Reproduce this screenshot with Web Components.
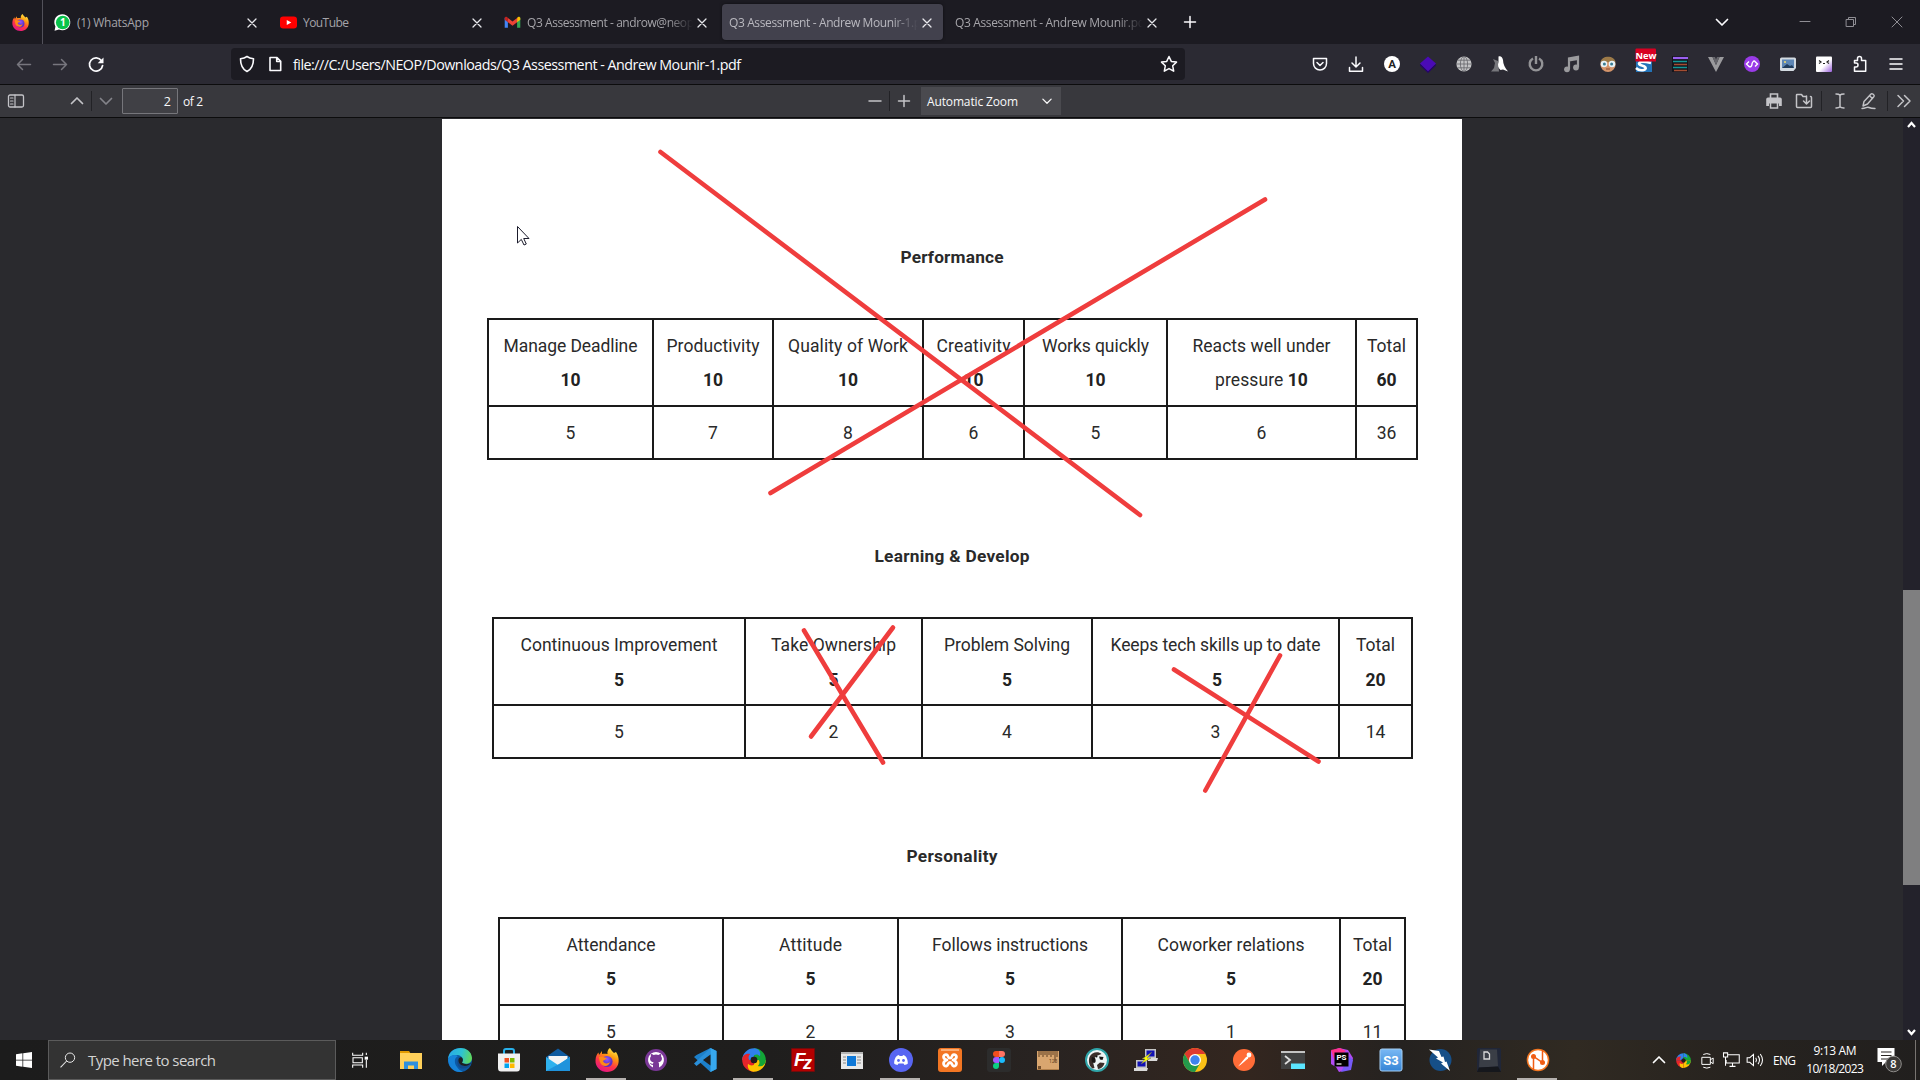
<!DOCTYPE html>
<html lang="en">
<head>
<meta charset="utf-8">
<title>Q3 Assessment - Andrew Mounir-1.pdf</title>
<style>
html,body{margin:0;height:100%;overflow:hidden;background:#2a2a2e}
body{font-family:"Open Sans","Noto Sans",sans-serif}
</style>
</head>
<body>
<desktop-screen></desktop-screen>
<script>
const firefox='<defs><linearGradient id="f" x1=".8" y1="0" x2=".3" y2="1"><stop offset="0" stop-color="#fff44f"/><stop offset=".35" stop-color="#ff980e"/><stop offset=".65" stop-color="#ff3647"/><stop offset="1" stop-color="#e31587"/></linearGradient><radialGradient id="g" cx=".5" cy=".3"><stop offset="0" stop-color="#9059ff"/><stop offset="1" stop-color="#5b2fc4"/></radialGradient></defs><path fill="url(#f)" d="M15 0c1 2 2 3 4 5l2-1c2 3 3 6 2.600 10C23 20 18 24 12 24S0 19.500 .5 12C.7 8.500 2 6 3.500 4.500L4 7l3-4v3c2-.5 4 0 5.500 0C12 4 13 1 15 0z"/><circle cx="12" cy="13.500" r="5.600" fill="url(#g)"/><path d="M4 9c3-1.500 5 .5 8 1-1 2-3 1.500-4 3 1 3 5 3 7 1-1 4-5 5-8 3-2-1.500-3-5-3-8z" fill="#ff8a16"/>';
const sharex='<g fill="none" stroke-width="8.600"><path stroke="#2f80ed" d="M4.500 12A7.500 7.500 0 0 1 12 4.500"/><path stroke="#12a637" d="M12 4.500A7.500 7.500 0 0 1 19.500 12"/><path stroke="#ffc400" d="M19.500 12A7.500 7.500 0 0 1 12 19.500"/><path stroke="#e5252a" d="M12 19.500A7.500 7.500 0 0 1 4.500 12"/></g><path fill="#2f80ed" d="M12 .2c5 0 7 4 6 8-2-2-4-2-6-1z"/><path fill="#12a637" d="M23.800 12c0 5-4 7-8 6 2-2 2-4 1-6z"/><path fill="#ffc400" d="M12 23.800c-5 0-7-4-6-8 2 2 4 2 6 1z"/><path fill="#e5252a" d="M.2 12c0-5 4-7 8-6-2 2-2 4-1 6z"/><circle cx="12" cy="12" r="3.300" fill="#241c1c"/>';
const L='fill="none" stroke="currentColor" stroke-linecap="round" stroke-linejoin="round"';
const ICONS={
firefox,sharex,
whatsapp:'<path d="M.8 23.500 2 17.500A11.300 11.300 0 1 1 7 22z" fill="#fff"/><circle cx="12.300" cy="12" r="9.600" fill="#09c34b"/><text x="12.300" y="17.200" font-family="Open Sans" font-weight="700" font-size="14" fill="#fff" text-anchor="middle">1</text>',
youtube:'<rect y="3.500" width="24" height="17" rx="4.500" fill="#f00"/><path d="M9.500 8.500v7l6.500-3.500z" fill="#fff"/>',
gmail:'<path d="M1 5v14.500h4.500V9z" fill="#4285f4"/><path d="M23 5v14.500h-4.500V9z" fill="#34a853"/><path d="M5.500 5.500 12 10.500l6.500-5v6L12 16.500l-6.500-5z" fill="#ea4335"/><path d="M1 6.500C1 3.500 4 3 5.500 5.500v6L1 8z" fill="#c5221f"/><path d="M23 6.500c0-3-3-3.500-4.500-1v6L23 8z" fill="#fbbc04"/>',
x:`<path ${L} stroke-width="1.250" d="m8 8 8 8M16 8l-8 8"/>`,
xs:`<path ${L} stroke-width="1" d="m7 7 10 10M17 7 7 17"/>`,
plus:`<path ${L} stroke-width="1.500" d="M12 6.500v11M6.500 12h11"/>`,
minus:`<path ${L} stroke-width="1.500" d="M6 12h12"/>`,
min:`<path ${L} stroke-width="1" d="M7 11.500h10"/>`,
restore:`<path ${L} stroke-width="1" d="M7.500 9.500h7v7h-7zM9.500 9V7.500h7v7H15"/>`,
down:`<path ${L} stroke-width="1.700" d="m6.500 9.500 5.500 5.500 5.500-5.500"/>`,
up:`<path ${L} stroke-width="1.700" d="m6.500 14.500 5.500-5.500 5.500 5.500"/>`,
back:`<path ${L} stroke-width="1.500" d="M5.500 12.500h13M10.500 7.500l-5 5 5 5"/>`,
fwd:`<path ${L} stroke-width="1.500" d="M5.500 12.500h13M13.500 7.500l5 5-5 5"/>`,
reload:`<path ${L} stroke-width="1.700" d="M17.500 8.700A6.600 6.600 0 1 0 18.600 13.500"/><path fill="currentColor" d="M19.500 5.500v5.800h-5.800z"/>`,
shield:`<path ${L} stroke-width="1.600" d="M12 4.500c2 1.500 4 2 6.500 2.200 0 5-1.500 10.300-6.500 12.800-5-2.500-6.500-7.800-6.500-12.800C8 6.500 10 6 12 4.500z"/>`,
file:`<path ${L} stroke-width="1.600" d="M6 5.500h7l3.700 3.700v9.300H6zM12.700 5.500v4h4"/>`,
star:`<path ${L} stroke-width="1.500" d="m12 4.500 2.300 4.900 5.200.7-3.800 3.700 1 5.400-4.700-2.600-4.700 2.600 1-5.400-3.800-3.700 5.200-.7z"/>`,
pocket:`<path ${L} stroke-width="1.500" d="M5.500 6.500h13v5a6.500 6.500 0 0 1-13 0zM9 10.500l3 3 3-3"/>`,
download:`<path ${L} stroke-width="1.500" d="M12 5v9.500M8 11l4 4 4-4M5.500 15.500v3.700h13v-3.700"/>`,
acirc:'<circle cx="12" cy="12" r="8" fill="#fff"/><text x="12" y="16" font-family="Roboto" font-weight="700" font-size="11.500" fill="#222" text-anchor="middle">A</text>',
cube:'<path d="m12 4.500 8 7-8 8-8-8z" fill="#4a0bb5"/><path d="m4 12 8 7.500 8-7.500v1.500L12 21l-8-7.500z" fill="#24006e"/>',
globe:'<circle cx="12" cy="12" r="7.600" fill="#c4c4c6"/><g fill="none" stroke="#65656b" stroke-width=".8"><ellipse cx="12" cy="12" rx="3.600" ry="7.500"/><path d="M12 4v16M4 12h16M5.500 8.200h13M5.500 15.800h13"/></g>',
wolf:'<path d="M5 7l2 4-1 5-3 3.500h8L10 9z" fill="#77777c"/><path d="M10.500 4.500c2-1 4 .5 4.500 3.500 0 4 2 8 5 11.500l-5-2-2.500.5c-2.500-2-3-5-2-8z" fill="#fff"/>',
power:'<path fill="none" stroke="#939396" stroke-width="2.400" d="M9 6.500a6.300 6.300 0 1 0 6 0M12 4v8"/>',
music:'<path fill="none" stroke="#9a9a9d" stroke-width="2.200" d="M9 17V6.500l9-1.700V15M9 8.500l9-1.700"/><circle cx="7" cy="17.300" r="2.900" fill="#9a9a9d"/><circle cx="16" cy="15.500" r="2.900" fill="#9a9a9d"/>',
face:'<circle cx="12" cy="12.500" r="7.600" fill="#d4946a"/><path d="M4.500 10C6 3 18 3 19.500 10z" fill="#9c7a48"/><circle cx="8" cy="12" r="3.300" fill="#e8f3f7"/><circle cx="16" cy="12" r="3.300" fill="#e8f3f7"/><circle cx="8.400" cy="12" r="1.500" fill="#397c91"/><circle cx="15.600" cy="12" r="1.500" fill="#397c91"/><path d="M10 17h4" stroke="#8c4a30"/>',
snew:'<path d="M4 8h16v12H4z" fill="#2373b8"/><path d="M4 16c4 4 11 2 9.500-.5C12 13 7 14 7 11.500 8 9 15 10 19 11" fill="none" stroke="#fff" stroke-width="2.600"/><path d="M4.500-3.500h18.500q1 0 1 1V9.500H4q-.5 0-.5-.5V-2.500q0-1 1-1z" fill="#d70022"/><text x="14" y="6.500" font-family="Open Sans" font-weight="700" font-size="9.300" fill="#fff" text-anchor="middle">New</text>',
bars:'<rect x="4" y="4" width="16" height="16" fill="#15151c"/><path d="M5 6h15" stroke="#9a60f0" stroke-width="2.200"/><path d="M5 9.500h14M5 15.500h14" stroke="#149796" stroke-width="1.500"/><path d="M6 12.500h13M6 18.500h13" stroke="#a44d32" stroke-width="1.500"/>',
vee:'<path d="M4 5h4.500L12 13l3.500-8H20l-8 15z" fill="#9a9a9d"/><path d="M8.500 5H11l1 2.500L13 5h2.500L12 13z" fill="#66666c"/>',
purple:'<circle cx="12" cy="12" r="8" fill="#9a3be8"/><path d="m9 9.500-2.500 2.500L9 14.500c2 1 3-1 3-2.500s2-4 3-2.500l2.500 2.500-2.500 2.500" fill="none" stroke="#fff" stroke-width="1.400"/>',
image:'<path d="M5.500 5.500h13q1.500 0 1.500 1.500v9l-2.500 3h-12Q4 19 4 17.500V7q0-1.500 1.500-1.500z" fill="#d3dae1"/><rect x="6" y="7.500" width="12" height="8.500" fill="#5d86b5"/><path d="m6 16 5-4 3 2 2-1 2 3z" fill="#203c5c"/><circle cx="9" cy="10" r="1" fill="#f3dc71"/>',
kitty:'<defs><linearGradient id="k" x1="0" y1="0" x2="1" y2="1"><stop offset=".55" stop-color="#fff"/><stop offset="1" stop-color="#995edc"/></linearGradient></defs><rect x="4" y="4.500" width="16" height="15.500" rx="1" fill="url(#k)"/><path d="m7 8.500 2 1.500-2 1.500M17 8.500 15 10l2 1.500M11 11.500h2" fill="none" stroke="#222" stroke-width="1.200"/>',
puzzle:`<path ${L} stroke-width="1.500" d="M9.500 8.500V6.500a2 2 0 0 1 4 0v2h4.200v10.700H6.500V15H8a2 2 0 0 0 0-4H6.500V8.500z"/>`,
menu:`<path ${L} stroke-width="1.500" d="M6 7h12M6 12h12M6 17h12"/>`,
sidebar:`<rect x="4.500" y="6" width="15" height="12" rx="1.500" ${L} stroke-width="1.300"/><path ${L} stroke-width="1.200" d="M11 6v12M6.500 9h2.500M6.500 12h2.500M6.500 15h2.500"/>`,
print:'<path fill="none" stroke="currentColor" stroke-width="1.600" d="M8.500 9V5h7v4"/><path fill="currentColor" fill-rule="evenodd" d="M6 8.500h12a1.800 1.800 0 0 1 1.800 1.800V17H17v-2.500H7V17H4.200v-6.700A1.800 1.800 0 0 1 6 8.500z"/><path fill="none" stroke="currentColor" stroke-width="1.500" d="M8.500 14v5h7v-5"/>',
save:`<path ${L} stroke-width="1.500" d="M14.500 7.500H11l-1.500-2H5A.5.5 0 0 0 4.500 6v11.500a1 1 0 0 0 1 1h13a1 1 0 0 0 1-1v-9a1 1 0 0 0-1-1M14.500 7v7.500M11.500 12l3 3 3-3"/>`,
ibeam:`<path ${L} stroke-width="1.500" d="M12 6v12M8 5q3 0 4 1.200Q13 5 16 5M8 19q3 0 4-1.200 1 1.200 4 1.200"/>`,
pen:`<path ${L} stroke-width="1.400" d="m7 12.500 7-7.500c1-1 4 1 3 2.500L10.500 15l-4.500 2zM5 19.500c4 0 5-2 7-1s4 1 6 1M12.800 7l2.700 2.500"/>`,
dbl:`<path ${L} stroke-width="1.500" d="m6 6.500 5.500 5.500L6 17.500M12.500 6.500 18 12l-5.500 5.500"/>`,
win:'<path fill="#fff" d="M0 3.400 9.700 2v9.500H0zM10.800 1.900 24 0v11.500H10.800zM0 12.700h9.700v9.500L0 20.800zM10.800 12.700H24V24l-13.200-1.900z"/>',
search:`<circle cx="15" cy="8.500" r="7" fill="none" stroke="#e8e8e8" stroke-width="1.500"/><path d="M10 13.500.8 23" stroke="#e8e8e8" stroke-width="1.600"/>`,
taskview:'<path d="M1 4V1.500M1 1v4h15V1M1 23.500v-4h15v4M1.500 8.500h14v7.500h-14zM21.500 1v3.500M21.500 12v11.500" fill="none" stroke="#fff" stroke-width="1.600"/><path fill="#fff" d="M19 7h5v4.500h-5z"/>',
explorer:'<path d="M1 3h9l2 3H1z" fill="#e29a00"/><path d="M1 5h22v16H1z" fill="#ffd05a"/><path d="M5 21v-7.500h14V21h-4v-3.500H9V21z" fill="#2f8fdd"/>',
edge:'<defs><linearGradient id="e" x1="0" y1=".3" x2="1" y2=".5"><stop offset="0" stop-color="#29a9e8"/><stop offset=".55" stop-color="#2ec3d2"/><stop offset="1" stop-color="#61d95a"/></linearGradient></defs><circle cx="12" cy="12" r="12" fill="#0c59a4"/><path d="M0 11C1-3 23-4 24 10c0 5-5 7-10 5-.5-.5 1-1.500 1-3 0-3-3-5-6.500-5C4 7 1 9 0 11z" fill="url(#e)"/><path d="M0 11c2-4 7-5 10-3-4 2-4 7-1 11 2 3 4 4 6 4.500C7 26 0 19 0 11z" fill="#1683d8"/><path d="M11 9c-2 5 4 10 12 7-2 4-6 5-9 4.500-5-1-6-7-3-11.500z" fill="#134a8a"/><path d="M10.500 13c-.5-3 2.500-5 4-2.500.8 1.500 0 3-.5 4 2.500 2.500 7 2 9.500 0-3 5-12 4.500-13-1.500z" fill="#1d2020"/>',
store:'<path d="M7 7V3q0-2 2-2h6q2 0 2 2v4" fill="none" stroke="#28b0ea" stroke-width="2"/><path d="M1 5.500h22V20q0 3.500-3 3.500H4Q1 23.500 1 20z" fill="#f1f1f1"/><path d="M7.500 10H12v4.500H7.500z" fill="#f25022"/><path d="M13 10h4.500v4.500H13z" fill="#7fba00"/><path d="M7.500 15.500H12V20H7.500z" fill="#00a4ef"/><path d="M13 15.500h4.500V20H13z" fill="#ffb900"/>',
mail:'<path d="M0 9 12 .5 24 9v9H0z" fill="#0f5a9e"/><path d="M2.500 8h19v6l-9 5-10-5z" fill="#f4f4f4"/><path d="M0 9l12 8L24 9v14H0z" fill="#2fb2ee"/><path d="m0 23 14-7.500L24 9v14z" fill="#1f93dc"/>',
github:'<circle cx="12" cy="12" r="11" fill="#7a3796"/><path d="M12 4a8 8 0 0 0-3 15.400v-2.600c-2.500.5-2.500-1.500-3.500-1.800 1.500-.5 2 1 3.500.8 0-.7.400-1.200.7-1.500-3.700-.5-4.500-4-2.700-6.100-.3-.7-.2-1.700.1-2.200 1 0 1.800.4 2.400.9a9 9 0 0 1 5 0c.600-.5 1.400-.9 2.400-.9.3.5.400 1.500.1 2.200 1.800 2.100 1 5.600-2.700 6.100.4.500.7 1 .7 2v3.100A8 8 0 0 0 12 4z" fill="#fff"/>',
vscode:'<path d="m17.500 0 6 3v18l-6 3L1 9l2.500-2z" fill="#1c7fc9"/><path d="M17.500 0 1 15.500 3.500 18 17.500 7z" fill="#2a8fd9"/><path d="m17.500 0 6 3v18l-6 3z" fill="#37a8ee"/><path d="M17.500 6.500 10 12l7.500 5.500z" fill="#1f1e1d"/>',
filezilla:'<path d="M.5.5h23v23H.5z" fill="#b30000"/><path d="M.5.5h23v23H.5z" fill="none" stroke="#7b0909" stroke-dasharray="1 1"/><text x="3" y="18" font-family="Liberation Sans" font-weight="700" font-style="italic" font-size="19" fill="#fff">F</text><text x="12" y="21" font-family="Liberation Sans" font-weight="700" font-style="italic" font-size="18" fill="#fff">z</text>',
window:'<path d="M1 4h22v17H1z" fill="#e8e8e8"/><path d="M1 4h22v2H1z" fill="#b5b5b5"/><path d="M7 8h9v10H7z" fill="#0f78d7"/><path d="M3 9h3M3 12h3M3 15h3M17 9h4M17 12h4M17 15h4" stroke="#888"/>',
discord:'<circle cx="12" cy="12" r="12" fill="#5865f2"/><path d="M8.500 7.500 10 7l.5 1h3l.5-1 1.500.5c2 .8 3.500 5 3.300 8-1 1-2.300 1.300-3.300 1.500l-1-1.500h-5L8.500 17c-1-.2-2.300-.5-3.300-1.500-.2-3 1.300-7.200 3.300-8z" fill="#fff"/><circle cx="9.500" cy="12.500" r="1.400" fill="#5865f2"/><circle cx="14.500" cy="12.500" r="1.400" fill="#5865f2"/>',
xampp:'<rect width="24" height="24" rx="3" fill="#f37623"/><path d="M3 2h18" stroke="#ffc292" stroke-width="1.500"/><path d="M8.500 6.700c-3.500-.7-4.500 4 .5 5.300-5 1.300-4 6.700-.5 6 2-.3 1-3.500 3.500-3.500s1.500 3.200 3.500 3.500c3.500.7 4.500-4.700-.5-6 5-1.300 4-6 .5-5.300-2 .3-1 3.500-3.500 3.500s-1.500-3.200-3.500-3.500z" fill="none" stroke="#fff" stroke-width="2.800" stroke-linejoin="round"/>',
figma:'<rect width="24" height="24" rx="3" fill="#2c2c2c"/><path d="M12 3H9a3 3 0 0 0 0 6h3z" fill="#f24e1e"/><path d="M12 3h3a3 3 0 0 1 0 6h-3z" fill="#ff7262"/><path d="M12 9H9a3 3 0 0 0 0 6h3z" fill="#a259ff"/><circle cx="15" cy="12" r="3" fill="#1abcfe"/><path d="M12 15H9a3 3 0 1 0 3 3z" fill="#0acf83"/>',
ruler:'<path d="M1 3h22v19H1z" fill="#d9a66f"/><path d="M3 3v6M5 3v4M7 3v6M9 3v4M11 3v6M13 3v4M15 3v6M17 3v4M19 3v11M21 3v6" stroke="#5f3f22"/><path d="M1 21.500h22" stroke="#b07e49"/><text x="13" y="15" font-size="5" font-family="Roboto" fill="#5f3f22">123</text><path d="M2 18h3v3H2z" fill="#76502d"/>',
dbeaver:'<circle cx="12" cy="12" r="11" fill="#eef5f5" stroke="#2fa5a9" stroke-width="2"/><path d="M4.500 9c2-5 9-6 12-3l-5 2-4 4 2 8-2 .5c-3-2-4.500-7-3-11.500z" fill="#3a2e2a"/><path d="m12 17 3-2.500 4.500.5c-1 4-3.500 5.500-6.500 6z" fill="#3a2e2a"/><path d="M14 8.500l4.500.5-1 3-2.500-.5z" fill="#191514"/><circle cx="11.500" cy="8.500" r="1" fill="#111"/><path d="M7 9c-1 3 0 6 2 6s2-3 1-5z" fill="#191514"/>',
putty:'<path d="M11 1h11v9H11zM2 12h11v8H2z" fill="#c4c4c4"/><path d="M12.500 2.500h8v6h-8zM3.500 13.500h8v5h-8z" fill="#1111b5"/><path d="M14 10h10l-1 3h-9zM0 20h14l-1 3H0z" fill="#d9d9d9"/><path d="m18 4-5 6h4L7 16l4-5H8z" fill="#ff0" stroke="#666" stroke-width=".5"/>',
chrome:'<circle cx="12" cy="12" r="12" fill="#fbc116"/><path d="M1.600 6a12 12 0 0 1 20.800 0H12l-5 9z" fill="#df3a2e"/><path d="M1.600 6A12 12 0 0 0 12 24l5.200-9-5.200 3-5-3z" fill="#239a4c"/><circle cx="12" cy="12" r="6" fill="#fff"/><circle cx="12" cy="12" r="4.700" fill="#3f83ee"/>',
postman:'<circle cx="12" cy="12" r="11" fill="#ff6c37"/><path d="M6 18.500 14 9c1.500-1.500 3 0 2 1.500L9 16.500z" fill="#fff"/><circle cx="17" cy="7" r="2.400" fill="#fff"/>',
terminal:'<path d="M0 3h24v18H0z" fill="#414141"/><path d="M0 3h24v2H0z" fill="#c3c3c3"/><path d="m4 8 5 4-5 4" fill="none" stroke="#ddd" stroke-width="1.800"/><path d="M10 15.500h14V21H10z" fill="#5be5ff"/>',
phpstorm:'<path d="m1 3 8-3 9 2 5 8-3 11-11 3-3-5-5-3z" fill="#b24bf5"/><path d="m1 2 9-2 6 3-12 8z" fill="#ff318c"/><path d="m19 8 4 4-2 10-10 2z" fill="#765af8"/><path d="M4.500 4.500h14v14h-14z" fill="#000"/><text x="11.500" y="11.500" font-family="Roboto" font-weight="700" font-size="8" fill="#fff" text-anchor="middle">PS</text><path d="M6.500 16h5" stroke="#fff" stroke-width="1.200"/>',
s3:'<defs><linearGradient id="s" x2="0" y2="1"><stop stop-color="#79b8f4"/><stop offset="1" stop-color="#3685d6"/></linearGradient></defs><rect x="1" y="1" width="22" height="22" rx="2" fill="url(#s)" stroke="#a6cff4"/><text x="12" y="16.500" font-family="Roboto" font-weight="700" font-size="13" fill="#fff" text-anchor="middle">S3</text>',
zap:'<circle cx="12.500" cy="12" r="11" fill="#164f88"/><path d="M1 1.500 11 3l2.500 6 2-.5 1.500 5.500 1.500-.5L22 23l-9-7.500 2-1-7-4 2-1z" fill="#fff"/>',
key:'<rect width="24" height="24" rx="1.500" fill="#202637"/><path d="M3 1.500h17l1 17-19 1z" fill="#3a3e46"/><path d="M2 19.500 21 18.500 24 24H0z" fill="#15171c"/><path d="M7 4h3.500l2 2v5H7z" fill="none" stroke="#dadada" stroke-width="1.300"/>',
nport:'<circle cx="12" cy="12" r="11.300" fill="#f47721"/><circle cx="12" cy="12" r="9.800" fill="#fff"/><path d="M7.500 22V8.500l9 6V2" fill="none" stroke="#f05d14" stroke-width="1.500"/><circle cx="7.500" cy="8.500" r="2.500" fill="#f05d14"/><circle cx="16.500" cy="14.500" r="2.500" fill="#f05d14"/>',
camera:'<path d="M4 7.500h12v10H4zM16 11l4-2.500v8L16 14M6 3.500Q11 1 16 3.500M6 21.500q5 2.500 10 0" fill="none" stroke="#fff" stroke-width="1.400"/>',
network:'<path d="M8 5h15v11H5.500v-4M2 2.500h5.500V8H2zM4.700 8v11.500M14 16v4M10 20.500h8" fill="none" stroke="#fff" stroke-width="1.400"/>',
volume:'<path d="M1.500 9v6h3.500l5 4.500v-15L5 9zM13 9q2 3 0 6M16 6.500q4 5.500 0 11M19 4q6 8 0 16" fill="none" stroke="#fff" stroke-width="1.400"/>',
note:'<path d="M-1.500 0h17v14H7l-4 4v-4H-1.500z" fill="#fff"/><path d="M2 4h10.500M2 7.500h10.500M2 11h7" stroke="#292522" stroke-width="1.200"/><circle cx="14.500" cy="16" r="7.800" fill="#3b3937" stroke="#8e8c8a"/><text x="14.500" y="20" font-family="Open Sans" font-size="11" font-weight="600" fill="#fff" text-anchor="middle">8</text>'
};
function define(name,html,after){
  const t=document.createElement('template');t.innerHTML=html;
  customElements.define(name,class extends HTMLElement{
    connectedCallback(){
      if(this.shadowRoot)return;
      this.attachShadow({mode:'open'}).append(t.content.cloneNode(true));
      if(after)after(this,this.shadowRoot);
    }
  });
}
define('ui-icon','<style>:host{display:block;flex:none}svg{display:block;width:100%;height:100%;overflow:visible}</style><svg viewBox="0 0 24 24"></svg>',(h,r)=>{
  const s=h.getAttribute('size')||24;h.style.width=h.style.height=s+'px';
  r.querySelector('svg').innerHTML=ICONS[h.getAttribute('name')];
});
/* fixed-width slot that centres one glyph */
define('icon-slot','<style>:host{display:flex;align-items:center;justify-content:center;flex:none;height:100%}</style><ui-icon></ui-icon>',(h,r)=>{
  h.style.width=h.getAttribute('w')+'px';
  const i=document.createElement('ui-icon');i.setAttribute('name',h.getAttribute('name'));i.setAttribute('size',h.getAttribute('size')||24);
  r.querySelector('ui-icon').replaceWith(i);
});
define('browser-tab',`<style>:host{display:flex;box-sizing:border-box;width:225px;height:44px;padding:4px 3px 4px 1px;color:#a5a4a9;font-size:12px}
.t{display:flex;align-items:center;flex:1;min-width:0;border-radius:4px;padding-left:7px;padding-top:1px}
:host([active]) .t{background:#42414d;color:#b9b8bf;box-shadow:0 0 3px #0008}
.l{flex:1;overflow:hidden;white-space:nowrap;line-height:20px;margin-right:-3px}
ui-icon.fav{margin-right:6px}
:host([fade]) .l{-webkit-mask:linear-gradient(90deg,#000 calc(100% - 26px),transparent)}
.c{color:#e8e8ec;margin-right:4px}
</style><div class="t"><div class="l"><slot></slot></div><ui-icon class="c" name="x" size="24"></ui-icon></div>`,(h,r)=>{
  const n=h.getAttribute('icon');
  if(n){const i=document.createElement('ui-icon');i.className='fav';i.setAttribute('name',n);i.setAttribute('size',17);r.querySelector('.t').prepend(i)}
});
define('tab-strip',`<style>:host{display:flex;height:44px;background:#1c1b22;align-items:center;color:#fbfbfe}
.pin{height:44px;display:flex;align-items:center;justify-content:center;border-right:1px solid #52515a;margin-right:3px;box-sizing:border-box;width:43px;padding-right:2px}
.sp{flex:1}.w{color:#8f8e94;display:flex;height:44px}</style>
<div class="pin"><ui-icon name="firefox" size="17"></ui-icon></div>
<browser-tab icon="whatsapp"><fit-text w="72">(1) WhatsApp</fit-text></browser-tab>
<browser-tab icon="youtube" style="padding-left:2px"><fit-text w="46">YouTube</fit-text></browser-tab>
<browser-tab icon="gmail" fade><fit-text w="167">Q3 Assessment - androw@neop</fit-text></browser-tab>
<browser-tab active fade><fit-text w="192">Q3 Assessment - Andrew Mounir-1.p</fit-text></browser-tab>
<browser-tab fade style="padding-left:2px"><fit-text w="190">Q3 Assessment - Andrew Mounir.pd</fit-text></browser-tab>
<icon-slot name="plus" w="37"></icon-slot><div class="sp"></div><icon-slot name="down" w="40"></icon-slot>
<div style="width:40px"></div><div class="w"><icon-slot name="min" w="46"></icon-slot><icon-slot name="restore" w="46"></icon-slot><icon-slot name="xs" w="46"></icon-slot></div>`);
define('nav-bar',`<style>:host{display:flex;height:40px;background:#2b2a33;align-items:center;color:#fbfbfe;padding-left:6px;box-sizing:border-box}
.d{color:#77767e}.url{display:flex;align-items:center;width:954px;height:32px;background:#1c1b22;border-radius:4px;margin-left:117px;margin-right:117px}
.txt{font-size:14.300px;line-height:32px;flex:1;margin-left:4px;padding-top:2px;white-space:nowrap}.ext{display:flex;height:40px}</style>
<icon-slot class="d" name="back" w="36"></icon-slot><icon-slot class="d" name="fwd" w="36"></icon-slot><icon-slot name="reload" w="36"></icon-slot>
<div class="url"><icon-slot name="shield" w="32"></icon-slot><icon-slot name="file" w="26"></icon-slot><div class="txt"><fit-text w="448">file:///C:/Users/NEOP/Downloads/Q3 Assessment - Andrew Mounir-1.pdf</fit-text></div><icon-slot name="star" w="32"></icon-slot></div>
<div class="ext"></div>`,(h,r)=>{
  r.querySelector('.ext').innerHTML='pocket download acirc cube globe wolf power music face snew bars vee purple image kitty puzzle menu'.split(' ').map(n=>`<icon-slot name="${n}" w="36"></icon-slot>`).join('');
});
define('pdf-toolbar',`<style>:host{display:flex;height:34px;box-sizing:border-box;border-top:1px solid #0c0c0d;border-bottom:1px solid #0c0c0d;background:#38383d;align-items:center;color:#c4c4c8;font-size:12px}
i{width:1px;height:20px;background:#222226}.d{color:#84848a}
.in{width:56px;height:26px;box-sizing:border-box;border:1px solid #76767b;background:#404045;color:#f9f9fa;text-align:right;line-height:26px;padding-right:6px;border-radius:1px;font-size:12.500px}
.of{margin-left:5px;width:20px;color:#f9f9fa;white-space:nowrap;padding-top:1px}
.sel{width:140px;height:28px;background:#4a4a4f;color:#f9f9fa;display:flex;align-items:center;justify-content:space-between;padding-left:6px;box-sizing:border-box}
.sel fit-text{padding-top:1px}</style>
<icon-slot name="sidebar" w="32"></icon-slot><div style="width:31px"></div><icon-slot name="up" w="28"></icon-slot><i></i><icon-slot class="d" name="down" w="28"></icon-slot>
<div class="in" style="margin-left:2px">2</div><div class="of"><fit-text w="20">of 2</fit-text></div>
<div style="width:658px"></div><icon-slot name="minus" w="28"></icon-slot><i></i><icon-slot name="plus" w="28"></icon-slot>
<div class="sel" style="margin-left:3px"><fit-text w="91">Automatic Zoom</fit-text><icon-slot name="down" w="29" size="18"></icon-slot></div>
<div style="flex:1"></div><icon-slot name="print" w="30"></icon-slot><icon-slot name="save" w="30"></icon-slot><i style="margin-left:2px;margin-right:2px"></i><icon-slot name="ibeam" w="32"></icon-slot><icon-slot name="pen" w="26"></icon-slot><i style="margin:0 2px 0 5px"></i><icon-slot name="dbl" w="28"></icon-slot><div style="width:2px"></div>`);
define('score-cell',`<style>:host{display:flex;flex-direction:column;align-items:center;box-sizing:border-box;border-left:2px solid #1a1a1a;border-top:2px solid #1a1a1a;padding-top:9px;line-height:34px;white-space:nowrap;min-width:0;margin-right:-2px;padding-right:2px;padding-left:0}</style><slot></slot>`);
define('score-table',`<style>:host{display:grid;box-sizing:content-box;border-right:2px solid #1a1a1a;border-bottom:2px solid #1a1a1a;grid-template-rows:87px 53px}::slotted(score-cell){margin-right:-2px}</style><slot></slot>`,h=>{
  const c=h.getAttribute('cols').split(',').map(Number);
  h.style.gridTemplateColumns=c.map(v=>v+'px').join(' ');
  h.style.width=c.reduce((a,b)=>a+b)+'px';h.style.marginLeft=h.getAttribute('inset')+'px';
});
define('score-section','<style>:host{display:block}h2{margin:0 0 44px;font-size:17.300px;line-height:34px;font-weight:700;text-align:center}</style><h2><slot name="title"></slot></h2><slot></slot>');
const cell=(w,t,b)=>`<score-cell><fit-text w="${w}">${t}</fit-text>${b?`<b>${b}</b>`:''}</score-cell>`;
const vals=a=>a.map(v=>`<score-cell><span>${v}</span></score-cell>`).join('');
define('pdf-viewer',`<style>:host{display:flex;flex:1;min-height:0;background:#2a2a2e;overflow:hidden}
.page{position:relative;margin:1px 0 0 442px;width:1020px;background:#fff;box-sizing:border-box;padding-top:121px;font-family:Roboto,"Open Sans",sans-serif;font-size:17.500px;color:#2a2a2a;overflow:hidden}
.page b{font-weight:700;color:#222}.second b{padding-top:1px}.second .k b{padding-left:3px}
score-section+score-section{margin-top:79px}score-section:nth-of-type(3){margin-top:80px}
svg{position:absolute;left:0;top:0;width:1020px;height:921px}
.bar{margin-left:auto;width:17px;background:#23222b;display:flex;flex-direction:column;align-items:center;justify-content:space-between;color:#fff}
.thumb{width:17px;height:295px;background:#7f7f80}</style>
<div class="page">
<score-section><fit-text slot="title" w="103">Performance</fit-text>
<score-table inset="45" cols="165,120,150,101,143,189,61">${cell(134,'Manage Deadline',10)+cell(93,'Productivity',10)+cell(120,'Quality of Work',10)+cell(74,'Creativity',10)+cell(107,'Works quickly',10)}<score-cell><fit-text w="138">Reacts well under</fit-text><fit-text w="93">pressure <b>10</b></fit-text></score-cell>${cell(39,'Total',60)+vals([5,7,8,6,5,6,36])}</score-table></score-section>
<score-section class="second"><fit-text slot="title" w="155">Learning &amp; Develop</fit-text>
<score-table inset="50" cols="252,177,170,247,73">${cell(197,'Continuous Improvement',5)+cell(125,'Take Ownership',5)+cell(126,'Problem Solving',5)+cell(210,'Keeps tech skills up to date',5).replace('<score-cell','<score-cell class="k"')+cell(39,'Total',20)+vals([5,2,4,3,14])}</score-table></score-section>
<score-section><fit-text slot="title" w="91">Personality</fit-text>
<score-table inset="56" cols="224,175,224,218,65">${cell(89,'Attendance',5)+cell(63,'Attitude',5)+cell(156,'Follows instructions',5)+cell(147,'Coworker relations',5)+cell(39,'Total',20)+vals([5,2,3,1,11])}</score-table></score-section>
<svg viewBox="442 119 1020 921"><g stroke="#ef3d3d" stroke-width="4.600" stroke-linecap="round"><path d="M660.500 152 1140 515"/><path d="M1265 199.500 770.500 493"/><path d="M804 630.500 883 762.500"/><path d="M893 627.500 811 736.500"/><path d="M1174 669.500 1318.500 761.500"/><path d="M1280 655.500 1205.300 790.500"/></g>
<path d="M517.500 226.500v16.500l3.800-3.600 2.700 5.600 2.300-1-2.600-5.500h5.300z" fill="#fff" stroke="#1b1b2b" stroke-width="1"/></svg>
</div>
<div class="bar"><svg style="position:static;width:11px;height:14px" viewBox="0 0 11 14"><path d="m2 9 3.500-4L9 9" fill="none" stroke="#fff" stroke-width="2.200"/></svg><div style="flex:1"></div><div class="thumb"></div><div style="height:141px"></div><svg style="position:static;width:11px;height:14px" viewBox="0 0 11 14"><path d="M2 4l3.500 4L9 4" fill="none" stroke="#fff" stroke-width="2.200"/></svg></div>`);
define('task-button','<style>:host{display:flex;flex-direction:column;align-items:center;justify-content:center;width:49px;height:40px;position:relative;flex:none}:host([open])::after{content:"";position:absolute;left:4px;right:5px;bottom:0;height:2px;background:#b5b1ae}</style><ui-icon></ui-icon>',(h,r)=>{
  const i=document.createElement('ui-icon');i.setAttribute('name',h.getAttribute('name'));i.setAttribute('size',24);r.querySelector('ui-icon').replaceWith(i);
});
define('task-bar',`<style>:host{display:flex;height:40px;background:linear-gradient(90deg,#1c1c1c 0,#1f1e1d 40%,#282321 54%,#33261f 65%,#252220 73%,#302a22 82%,#27231f 90%,#211f1e);color:#fff;align-items:center}
.s{display:flex;align-items:center;width:288px;height:40px;box-sizing:border-box;border:1px solid #5b5b5b;background:#333;padding-left:11px;color:#d4d4d4;font-size:15px}
.s ui-icon{margin-right:12px}.apps{display:flex;margin-left:2px}.tray{display:flex;margin-left:auto;align-items:center;height:40px;font-size:12px}
.clock{display:flex;flex-direction:column;align-items:center;width:58px;margin:0 15px 0 10px;line-height:18px}.end{width:1px;height:40px;background:#787471;margin-left:12px;margin-right:4px}</style>
<icon-slot name="win" w="48" size="16"></icon-slot><div class="s"><ui-icon name="search" size="16"></ui-icon><fit-text w="128">Type here to search</fit-text></div><icon-slot name="taskview" w="48" size="16"></icon-slot>
<div class="apps"></div>
<div class="tray"><icon-slot name="up" w="24"></icon-slot><icon-slot name="sharex" w="24" size="15"></icon-slot><icon-slot name="camera" w="24" size="17"></icon-slot><icon-slot name="network" w="24" size="18"></icon-slot><icon-slot name="volume" w="24" size="18"></icon-slot><div style="margin-left:6px"><fit-text w="23">ENG</fit-text></div>
<div class="clock"><fit-text w="43">9:13 AM</fit-text><fit-text w="57.500">10/18/2023</fit-text></div><ui-icon name="note" size="24"></ui-icon><div class="end"></div></div>`,(h,r)=>{
  r.querySelector('.apps').innerHTML='explorer edge store mail firefox* github vscode sharex* filezilla window discord* xampp figma ruler dbeaver putty chrome postman terminal phpstorm s3 zap key nport*'.split(' ').map(n=>`<task-button name="${n.replace('*','')}"${n.endsWith('*')?' open':''}></task-button>`).join('');
});
define('desktop-screen','<style>:host{display:flex;flex-direction:column;width:1920px;height:1080px;overflow:hidden}</style><tab-strip></tab-strip><nav-bar></nav-bar><pdf-toolbar></pdf-toolbar><pdf-viewer></pdf-viewer><task-bar></task-bar>');
/* text run whose letter-spacing is tuned so that it is exactly w pixels wide */
define('fit-text','<style>:host{display:inline-block;white-space:nowrap}</style><span><slot></slot></span>',(h,r)=>{
  const s=r.querySelector('span'),w=+h.getAttribute('w'),n=h.textContent.length-1;
  const ls=(w-s.getBoundingClientRect().width)/n;
  s.style.letterSpacing=ls+'px';h.querySelectorAll('b').forEach(b=>b.style.letterSpacing='0');
  h.style.width=w+'px';
});
</script>
</body>
</html>
